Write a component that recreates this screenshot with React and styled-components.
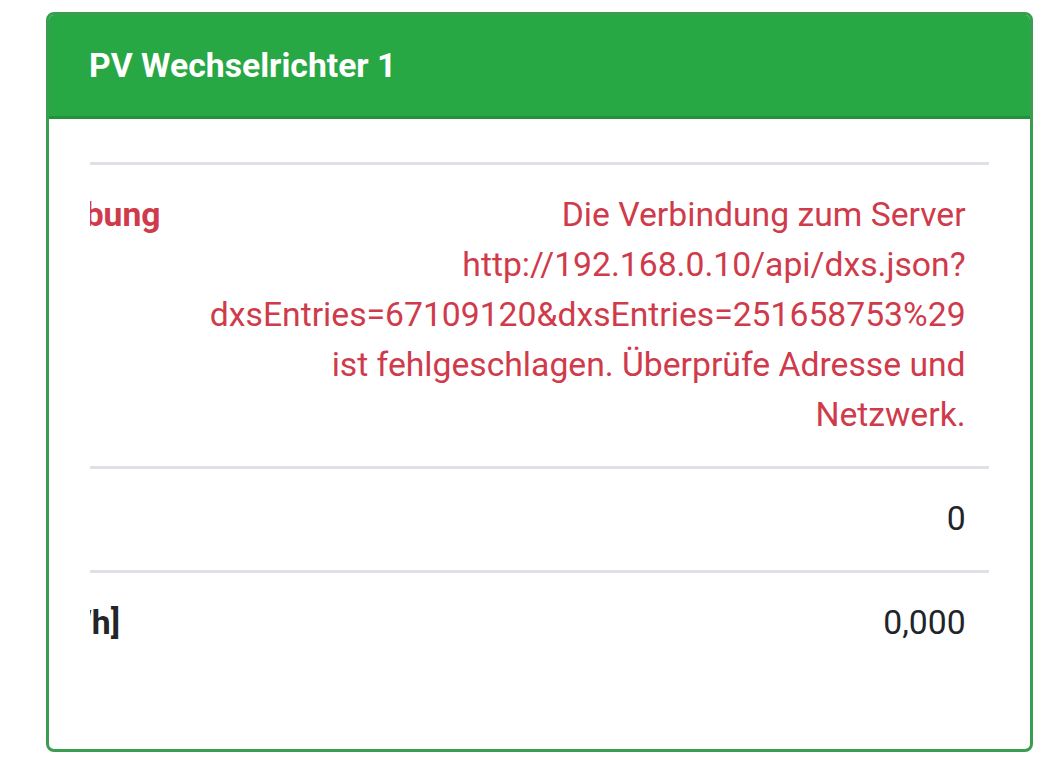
import React, { useLayoutEffect, useRef } from 'react';
import styled, { createGlobalStyle } from 'styled-components';

const GlobalStyle = createGlobalStyle`
  html, body {
    margin: 0;
    padding: 0;
    background: #ffffff;
    font-family: Roboto, "Liberation Sans", sans-serif;
  }
`;

const Page = styled.div`
  width: 1048px;
  height: 776px;
  box-sizing: border-box;
  padding: 12px 15px 0 46px;
`;

const Card = styled.div`
  display: flex;
  flex-direction: column;
  height: 740px;
  box-sizing: border-box;
  border: 3px solid #3a9d50;
  border-radius: 8px;
  overflow: hidden;
  background: #ffffff;
`;

const CardHeader = styled.div`
  display: flex;
  align-items: center;
  height: 101px;
  padding: 3px 41px 0 43px;
  margin: -3px -3px 0;
  background: #28a745;
  border-bottom: 3px solid #23903d;
`;

const Title = styled.h3`
  margin: 0;
  color: #ffffff;
  font-size: 33.7px;
  font-weight: 700;
`;

const CardBody = styled.div`
  padding: 43px 41px;
`;

const ScrollArea = styled.div`
  overflow: hidden;
`;

const Table = styled.table`
  border-collapse: collapse;
  font-size: 33.7px;
  line-height: 50px;
  color: #212529;
`;

const Cell = styled.td`
  border-top: 3px solid #dee2e6;
  padding: 25px ${p => (p.$label ? '20px' : '23px')} 26px 25px;
  vertical-align: top;
  text-align: ${p => (p.$label ? 'left' : 'right')};
  font-weight: ${p => (p.$label ? 700 : 400)};
  white-space: ${p => (p.$label ? 'nowrap' : 'normal')};
  color: ${p => (p.$error ? '#cf3b4b' : '#212529')};
`;

const Value = styled.div`
  width: 760px;
  text-align: right;
`;

const rows = [
  {
    label: 'Fehlerbeschreibung',
    value:
      'Die Verbindung zum Server http://192.168.0.10/api/dxs.json?dxsEntries=67109120&dxsEntries=251658753%29 ist fehlgeschlagen. Überprüfe Adresse und Netzwerk.',
    error: true,
  },
  { label: 'Fehlerstatus', value: '0' },
  { label: 'Produktion [kWh]', value: '0,000' },
];

const App = () => {
  const scrollRef = useRef(null);

  useLayoutEffect(() => {
    const el = scrollRef.current;
    if (el) el.scrollLeft = el.scrollWidth - el.clientWidth;
  }, []);

  return (
    <Page>
      <GlobalStyle />
      <Card>
        <CardHeader>
          <Title>PV Wechselrichter 1</Title>
        </CardHeader>
        <CardBody>
          <ScrollArea ref={scrollRef}>
            <Table>
              <tbody>
                {rows.map(row => (
                  <tr key={row.label}>
                    <Cell $label $error={row.error}>{row.label}</Cell>
                    <Cell $error={row.error}>
                      <Value>{row.value}</Value>
                    </Cell>
                  </tr>
                ))}
              </tbody>
            </Table>
          </ScrollArea>
        </CardBody>
      </Card>
    </Page>
  );
};

export default App;
